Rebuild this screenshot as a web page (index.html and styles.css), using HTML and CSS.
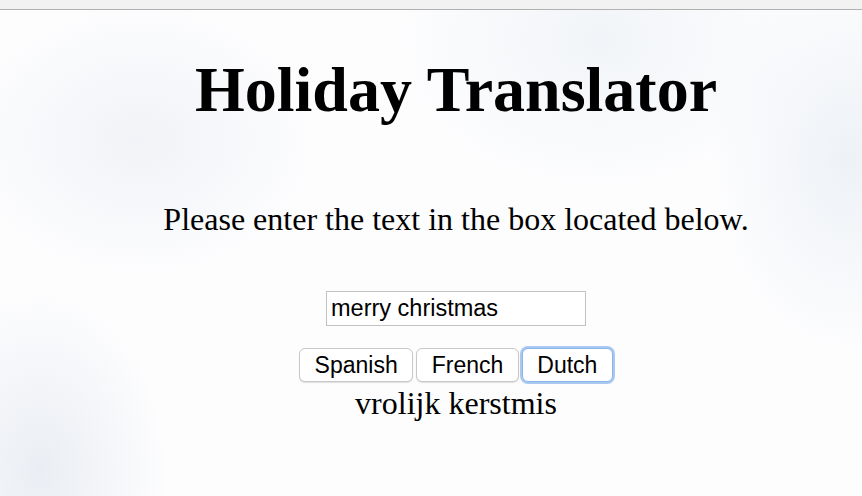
FILE: index.html
```html
<!DOCTYPE html>
<html>
<head>
<meta charset="utf-8">
<title>Holiday Translator</title>
<link rel="stylesheet" href="styles.css">
</head>
<body>
<div class="chrome"></div>
<main class="page">
  <h1 class="title">Holiday Translator</h1>
  <p class="prompt">Please enter the text in the box located below.</p>
  <input class="text-input" type="text" value="merry christmas">
  <div class="buttons">
    <button class="lang">Spanish</button>
    <button class="lang">French</button>
    <button class="lang focused">Dutch</button>
  </div>
  <div class="result">vrolijk kerstmis</div>
</main>
</body>
</html>
```
FILE: styles.css
```css
html, body {
  margin: 0;
  padding: 0;
  height: 100%;
}
body {
  font-family: "Liberation Serif", "Times New Roman", serif;
  color: #000;
  background:
    radial-gradient(ellipse 180px 260px at 40px 470px, rgba(215,222,232,0.5), rgba(215,222,232,0) 70%),
    radial-gradient(ellipse 260px 200px at 140px 140px, rgba(225,230,238,0.45), rgba(225,230,238,0) 70%),
    radial-gradient(ellipse 300px 220px at 600px 40px, rgba(230,236,242,0.5), rgba(230,236,242,0) 70%),
    radial-gradient(ellipse 200px 280px at 850px 160px, rgba(225,232,240,0.55), rgba(225,232,240,0) 70%),
    #fdfdfe;
  overflow: hidden;
}
.chrome {
  height: 9px;
  background: #f2f2f2;
  border-bottom: 1px solid #b0b0b0;
}
.page {
  display: flex;
  flex-direction: column;
  align-items: center;
  padding-left: 50px;
}
.title {
  font-size: 64px;
  font-weight: bold;
  margin: 43px 0 0;
  line-height: 74px;
}
.prompt {
  font-size: 32px;
  margin: 74px 0 0;
  line-height: 36px;
}
.text-input {
  margin-top: 54px;
  width: 260px;
  height: 35px;
  box-sizing: border-box;
  border: 1px solid #c2c2c2;
  background: #fff;
  font-family: "Liberation Sans", Arial, sans-serif;
  font-size: 23.5px;
  padding: 0 4px;
  color: #000;
  outline: none;
}
.buttons {
  display: flex;
  gap: 3px;
  margin-top: 22px;
}
.lang {
  font-family: "Liberation Sans", Arial, sans-serif;
  font-size: 23px;
  height: 34px;
  padding: 0 14.5px;
  background: #fff;
  border: 1px solid #c8c8c8;
  border-radius: 6px;
  box-shadow: 0 1px 1px rgba(0,0,0,0.12);
  color: #000;
}
.lang.focused {
  border: 1px solid #8db4ea;
  box-shadow: 0 0 0 2px #a9c8f2;
}
.result {
  font-size: 32px;
  line-height: 32px;
  margin-top: 5px;
}
```
